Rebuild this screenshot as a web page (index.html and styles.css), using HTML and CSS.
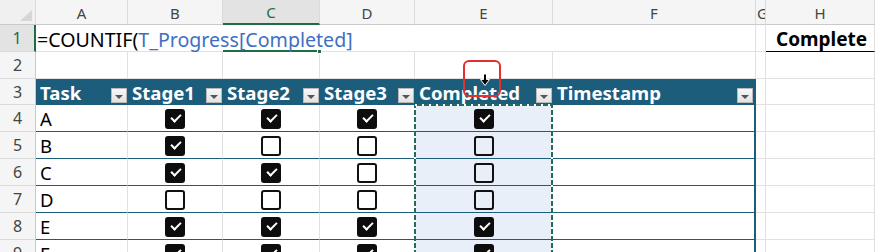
FILE: index.html
```html
<!DOCTYPE html>
<html>
<head>
<meta charset="utf-8">
<link rel="stylesheet" href="styles.css">
</head>
<body>
<div class="sheet">
  <!-- column headers -->
  <div class="ch corner"><span class="tri"></span></div>
  <div class="ch">A</div>
  <div class="ch">B</div>
  <div class="ch active">C</div>
  <div class="ch">D</div>
  <div class="ch">E</div>
  <div class="ch">F</div>
  <div class="ch g"><span>G</span></div>
  <div class="ch">H</div>

  <!-- row 1 -->
  <div class="rh active">1</div>
  <div class="c nob span2 formula">=COUNTIF(<span class="ref">T_Progress[Completed]</span></div>
  <div class="c nob editing"><span class="handle"></span></div>
  <div class="c span3"></div>
  <div class="c"></div>
  <div class="c h1">Complete</div>

  <!-- row 2 -->
  <div class="rh">2</div>
  <div class="c"></div>
  <div class="c"></div>
  <div class="c"></div>
  <div class="c"></div>
  <div class="c"></div>
  <div class="c"></div>
  <div class="c"></div>
  <div class="c"></div>

  <!-- row 3 table header -->
  <div class="rh">3</div>
  <div class="th">Task<span class="dd"></span></div>
  <div class="th">Stage1<span class="dd"></span></div>
  <div class="th">Stage2<span class="dd"></span></div>
  <div class="th">Stage3<span class="dd"></span></div>
  <div class="th">Completed<span class="dd"></span></div>
  <div class="th last">Timestamp<span class="dd"></span></div>
  <div class="c"></div>
  <div class="c"></div>

  <!-- row 4 -->
  <div class="rh">4</div>
  <div class="td">A</div>
  <div class="td cb"><span class="box on"></span></div>
  <div class="td cb"><span class="box on"></span></div>
  <div class="td cb"><span class="box on"></span></div>
  <div class="td cb sel"><span class="box on"></span></div>
  <div class="td last"></div>
  <div class="c"></div>
  <div class="c"></div>

  <!-- row 5 -->
  <div class="rh">5</div>
  <div class="td">B</div>
  <div class="td cb"><span class="box on"></span></div>
  <div class="td cb"><span class="box"></span></div>
  <div class="td cb"><span class="box"></span></div>
  <div class="td cb sel"><span class="box"></span></div>
  <div class="td last"></div>
  <div class="c"></div>
  <div class="c"></div>

  <!-- row 6 -->
  <div class="rh">6</div>
  <div class="td">C</div>
  <div class="td cb"><span class="box on"></span></div>
  <div class="td cb"><span class="box on"></span></div>
  <div class="td cb"><span class="box"></span></div>
  <div class="td cb sel"><span class="box"></span></div>
  <div class="td last"></div>
  <div class="c"></div>
  <div class="c"></div>

  <!-- row 7 -->
  <div class="rh">7</div>
  <div class="td">D</div>
  <div class="td cb"><span class="box"></span></div>
  <div class="td cb"><span class="box"></span></div>
  <div class="td cb"><span class="box"></span></div>
  <div class="td cb sel"><span class="box"></span></div>
  <div class="td last"></div>
  <div class="c"></div>
  <div class="c"></div>

  <!-- row 8 -->
  <div class="rh">8</div>
  <div class="td">E</div>
  <div class="td cb"><span class="box on"></span></div>
  <div class="td cb"><span class="box on"></span></div>
  <div class="td cb"><span class="box on"></span></div>
  <div class="td cb sel"><span class="box on"></span></div>
  <div class="td last"></div>
  <div class="c"></div>
  <div class="c"></div>

  <!-- row 9 -->
  <div class="rh">9</div>
  <div class="td">F</div>
  <div class="td cb"><span class="box on"></span></div>
  <div class="td cb"><span class="box on"></span></div>
  <div class="td cb"><span class="box on"></span></div>
  <div class="td cb sel"><span class="box on"></span></div>
  <div class="td last"></div>
  <div class="c"></div>
  <div class="c"></div>

  <!-- marching ants around referenced column -->
  <svg class="ants" width="140" height="160" viewBox="0 0 140 160">
    <rect x="1" y="1" width="137" height="170" fill="none" stroke="#246b5e" stroke-width="2"/>
    <rect x="1" y="1" width="137" height="170" fill="none" stroke="#ffffff" stroke-width="2" stroke-dasharray="2 5"/>
  </svg>

  <!-- mouse cursor highlight -->
  <div class="cursor">
    <svg width="12" height="14" viewBox="0 0 12 14">
      <path d="M4.5 1 H7.5 V6.5 H10.5 L6 12.5 L1.5 6.5 H4.5 Z" fill="#000" stroke="#fff" stroke-width="1"/>
    </svg>
  </div>
</div>
</body>
</html>
```

FILE: styles.css
```css
html, body {
  margin: 0;
  padding: 0;
  background: #ffffff;
  overflow: hidden;
}

.sheet {
  position: relative;
  width: 875px;
  height: 252px;
  overflow: hidden;
  display: grid;
  grid-template-columns: 36px 92px 95px 97px 95px 138px 203px 10px 109px;
  grid-template-rows: 25px 27px 27px 26px 27px 27px 27px 27px 27px 27px;
  font-family: "Noto Sans", "Liberation Sans", sans-serif;
}

.sheet > div {
  box-sizing: border-box;
  min-width: 0;
}

/* column headers */
.ch {
  background: #f5f5f5;
  border-right: 1px solid #dadada;
  border-bottom: 1px solid #c9c9c9;
  color: #444;
  font-size: 15px;
  display: flex;
  align-items: center;
  justify-content: center;
  padding-top: 1px;
}
.ch.active {
  background: #e3e3e3;
  color: #1e6b45;
  border-bottom: 2px solid #1e6b45;
}
.ch.corner {
  position: relative;
  background: #f0f0f0;
}
.tri {
  position: absolute;
  right: 3px;
  bottom: 3px;
  width: 0;
  height: 0;
  border-left: 12px solid transparent;
  border-bottom: 11px solid #d6d6d6;
}
.ch.g {
  justify-content: flex-start;
  overflow: hidden;
  padding-left: 1px;
}

/* row headers */
.rh {
  background: #f5f5f5;
  border-right: 1px solid #c9c9c9;
  border-bottom: 1px solid #dadada;
  color: #444;
  font-size: 16px;
  display: flex;
  align-items: center;
  justify-content: center;
}
.rh.active {
  background: #e3e3e3;
  color: #1e6b45;
  border-right: 2px solid #1e6b45;
}

/* plain cells */
.c {
  border-right: 1px solid #e1e1e1;
  border-bottom: 1px solid #e1e1e1;
  font-size: 18px;
  color: #000;
  display: flex;
  align-items: center;
  padding-left: 2px;
}
.c.nob { border-right: none; }
.span2 { grid-column: span 2; }
.span3 { grid-column: span 3; }

.formula {
  white-space: nowrap;
  overflow: visible;
  font-size: 19.6px;
  padding-left: 1px;
  padding-top: 2px;
  position: relative;
  z-index: 2;
}
.ref { color: #3f6fc2; }

.editing {
  position: relative;
  border-bottom: 2px solid #1e6b45;
}
.handle {
  position: absolute;
  right: -2px;
  bottom: -4px;
  width: 5px;
  height: 5px;
  background: #1e6b45;
  border: 1px solid #fff;
  box-sizing: border-box;
}

.h1 {
  font-weight: 700;
  font-size: 19px;
  border-bottom: 1px solid #000;
  padding-left: 10px;
  padding-top: 2px;
}

/* table header */
.th {
  background: #1d5d7c;
  color: #fff;
  font-weight: 700;
  font-size: 18.6px;
  display: flex;
  align-items: center;
  justify-content: space-between;
  padding-left: 4px;
  padding-right: 1px;
  white-space: nowrap;
  position: relative;
}
.dd {
  align-self: flex-end;
  margin-bottom: 2px;
  width: 16px;
  height: 15px;
  box-sizing: border-box;
  background: linear-gradient(#f7f7f7, #e3e3e3);
  border: 1px solid #b9b9b9;
  display: flex;
  align-items: center;
  justify-content: center;
  flex: none;
}
.dd::after {
  content: "";
  width: 0;
  height: 0;
  margin-top: 3px;
  border-left: 4px solid transparent;
  border-right: 4px solid transparent;
  border-top: 4px solid #555;
}

/* table body */
.td {
  border-right: 1px solid #e1e1e1;
  border-bottom: 1.5px solid #1d5d7c;
  font-size: 18.5px;
  color: #000;
  display: flex;
  align-items: center;
  padding-left: 4px;
}
.td.last, .th.last {
  border-right: 2px solid #1d5d7c;
}
.td.cb {
  justify-content: center;
  padding-left: 0;
  padding-top: 1px;
}
.td.sel {
  background: #e9eff9;
  border-right: none;
}

.box {
  width: 20px;
  height: 20px;
  box-sizing: border-box;
  border: 2px solid #111;
  border-radius: 3px;
  display: block;
  position: relative;
}
.box.on {
  background: #0d0d0d;
  border-color: #0d0d0d;
}
.box.on::after {
  content: "";
  position: absolute;
  left: 4px;
  top: 3px;
  width: 8px;
  height: 4px;
  border-left: 2px solid #fff;
  border-bottom: 2px solid #fff;
  transform: rotate(-45deg);
}

/* overlays */
.ants {
  position: absolute;
  left: 414px;
  top: 104px;
}
.cursor {
  position: absolute;
  left: 463px;
  top: 60px;
  width: 38px;
  height: 37px;
  box-sizing: border-box;
  border: 2px solid #e0312f;
  border-radius: 6px;
  z-index: 5;
}
.cursor svg {
  position: absolute;
  left: 14px;
  top: 11px;
}
```
